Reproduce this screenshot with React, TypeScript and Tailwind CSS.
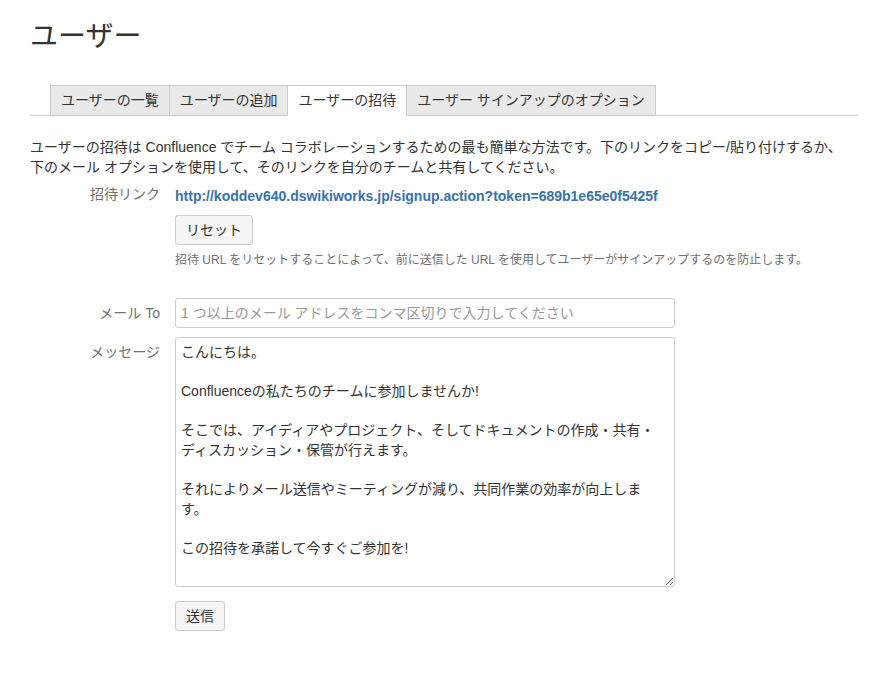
import { useState } from 'react'
import { clsx } from 'clsx'

const FONT = '[font-family:"Liberation_Sans","Noto_Sans_CJK_JP",Arial,sans-serif]'

const TABS = ['ユーザーの一覧', 'ユーザーの追加', 'ユーザーの招待', 'ユーザー サインアップのオプション']

const MESSAGE = `こんにちは。

Confluenceの私たちのチームに参加しませんか!

そこでは、アイディアやプロジェクト、そしてドキュメントの作成・共有・ディスカッション・保管が行えます。

それによりメール送信やミーティングが減り、共同作業の効率が向上します。

この招待を承諾して今すぐご参加を!`

function FieldRow({ label, children, className }: { label: string; children: React.ReactNode; className?: string }) {
  return (
    <div className={clsx('flex', className)}>
      <div className="w-[145px] shrink-0 pr-[15px] text-right text-[14px] leading-5 text-[#707070]">{label}</div>
      <div className="min-w-0 flex-1">{children}</div>
    </div>
  )
}

export default function App() {
  const [active, setActive] = useState(2)
  const [message, setMessage] = useState(MESSAGE)

  return (
    <div className={clsx('min-h-[680px] bg-white pr-5 pl-[30px] pt-[19px] text-[#333]', FONT)}>
      <h1 className="text-[28px] leading-9 font-normal text-[#333]">ユーザー</h1>

      <div className="mt-[30px] flex border-b border-[#ccc] pl-5">
        {TABS.map((t, i) => (
          <button
            key={t}
            type="button"
            onClick={() => setActive(i)}
            className={clsx(
              '-mb-px h-[31px] border border-[#ccc] px-[10px] text-[14px] leading-[29px] text-[#333]',
              i > 0 && '-ml-px',
              i === active ? 'border-b-white bg-white' : 'bg-[#e9e9e9]'
            )}
          >
            {t}
          </button>
        ))}
      </div>

      <p className="mt-[21px] pr-[10px] text-[14px] leading-5">
        ユーザーの招待は Confluence でチーム コラボレーションするための最も簡単な方法です。下のリンクをコピー/貼り付けするか、下のメール オプションを使用して、そのリンクを自分のチームと共有してください。
      </p>

      <FieldRow label="招待リンク" className="mt-[7px]">
        <a href="#" className="text-[14px] leading-5 font-bold text-[#3572b0]">
          http://koddev640.dswikiworks.jp/signup.action?token=689b1e65e0f5425f
        </a>
        <button
          type="button"
          className="mt-[7px] block h-[30px] rounded-[3px] border border-[#ccc] bg-[#f5f5f5] px-[10px] text-[14px] text-[#333]"
        >
          リセット
        </button>
        <div className="mt-[7px] text-[12px] leading-4 text-[#707070]">
          招待 URL をリセットすることによって、前に送信した URL を使用してユーザーがサインアップするのを防止します。
        </div>
      </FieldRow>

      <FieldRow label="メール To" className="mt-[30px] items-center">
        <input
          type="text"
          placeholder="1 つ以上のメール アドレスをコンマ区切りで入力してください"
          className="block h-[30px] w-[500px] rounded-[3px] border border-[#ccc] px-[5px] text-[14px] text-[#333] outline-none placeholder:text-[#999]"
        />
      </FieldRow>

      <FieldRow label="メッセージ" className="mt-[9px] [&>div:first-child]:pt-[5px]">
        <textarea
          value={message}
          onChange={(e) => setMessage(e.target.value)}
          className="block h-[250px] w-[500px] resize rounded-[3px] border border-[#ccc] pt-[5px] pr-[19px] pl-[5px] text-[14px] leading-[19.6px] text-[#333] outline-none"
        />
        <button
          type="button"
          className="mt-[14px] block h-[30px] rounded-[3px] border border-[#ccc] bg-[#f5f5f5] px-[10px] text-[14px] text-[#333]"
        >
          送信
        </button>
      </FieldRow>
    </div>
  )
}
